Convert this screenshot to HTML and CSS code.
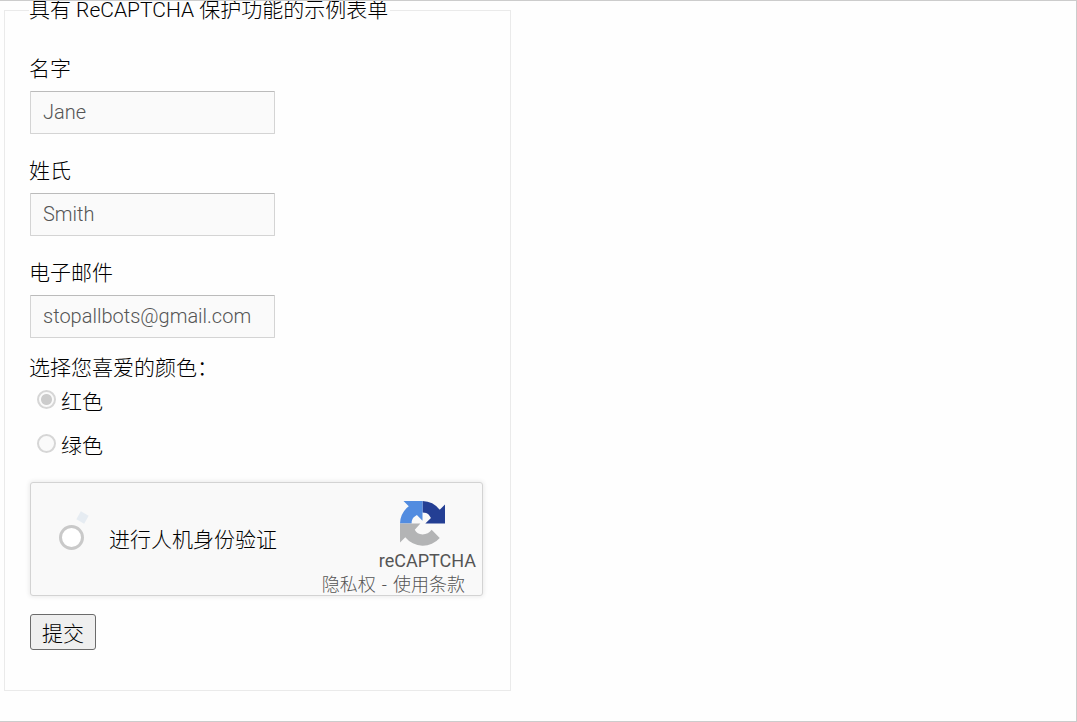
FILE: index.html
```
<!DOCTYPE html>
<html lang="zh-CN">
<head>
    <meta charset="UTF-8">
    <meta name="viewport" content="width=device-width, initial-scale=1.0">
    <title>ReCAPTCHA 示例</title>
    <link rel="stylesheet" href="styles.css">
</head>
<body>

    <form class="demo-form">
        <fieldset class="sample">
            <legend>具有 ReCAPTCHA 保护功能的示例表单</legend>

            <div class="field">
                <label for="first-name">名字</label>
                <input type="text" id="first-name" placeholder="Jane">
            </div>
            <div class="field">
                <label for="last-name">姓氏</label>
                <input type="text" id="last-name" placeholder="Smith">
            </div>
            <div class="field">
                <label for="email">电子邮件</label>
                <input type="text" id="email" placeholder="stopallbots@gmail.com">
            </div>

            <div class="colors" role="radiogroup" aria-labelledby="color-title">
                <p class="colors-title" id="color-title">选择您喜爱的颜色：</p>
                <div class="option">
                    <input type="radio" id="red" name="color" checked>
                    <label for="red">红色</label>
                </div>
                <div class="option">
                    <input type="radio" id="green" name="color">
                    <label for="green">绿色</label>
                </div>
            </div>

            <div class="captcha">
                <div class="captcha-check">
                    <input type="checkbox" id="human">
                    <span class="spark"></span>
                </div>
                <label for="human">进行人机身份验证</label>
                <div class="captcha-brand">
                    <svg class="captcha-logo" viewBox="0 0 64 64" aria-hidden="true">
                        <path fill="#243f94" d="M64 32V5l-7.500 7.500A31.900 31.900 0 0 0 32 0v16.500c4 0 7 1 9 3l3 4.500-8 8z"/>
                        <path fill="#528ce0" d="M32 0H5l7.500 7.500A31.900 31.900 0 0 0 0 32h16.500c0-4 1-7 3-9l4.500-3 8 8z"/>
                        <path fill="#b3b4b5" d="M0 32v27l7.500-7.500A31.900 31.900 0 0 0 56.500 52.500L45 41a16 16 0 0 1-13 6.500c-5 0-9-2-11-6.500l8-9z"/>
                    </svg>
                    <span class="captcha-name">reCAPTCHA</span>
                    <div class="captcha-links">
                        <a href="#">隐私权</a>
                        <span>-</span>
                        <a href="#">使用条款</a>
                    </div>
                </div>
            </div>

            <button class="submit" type="submit">提交</button>
        </fieldset>
    </form>

</body>
</html>
```
FILE: styles.css
```
* {
    box-sizing: border-box;
}
body {
    margin: 0;
    min-height: 100vh;
    border: 1px solid #ccc;
    border-left: none;
    background-color: #fefefe;
    color: #000;
    font-family: Roboto, "Noto Sans CJK SC", sans-serif;
    font-size: 21px;
    font-weight: 300;
}
.demo-form {
    max-width: 511px;
    padding-left: 4px;
}
.sample {
    margin: 0;
    padding: 35px 26px 40px 24px;
    border: 1px solid #eaeaea;
}
legend {
    padding: 0 2px 0 0;
    line-height: 18px;
}
.field {
    display: flex;
    flex-direction: column;
    align-items: flex-start;
    gap: 7px;
    margin-bottom: 22px;
}
.field label {
    line-height: 30px;
}
.field input {
    width: 245px;
    height: 43px;
    margin-left: 1px;
    padding: 0 12px 2px;
    border: 1px solid #d4d4d4;
    border-top-color: #bbb;
    border-radius: 1px;
    background-color: #fafafa;
    font: inherit;
    font-size: 20px;
}
.field input::placeholder {
    color: #555;
}
.colors {
    margin-top: -7px;
}
.colors-title {
    margin: 0;
    line-height: 30px;
}
.option {
    display: flex;
    align-items: center;
    gap: 5px;
    height: 44px;
    padding-left: 8px;
}
.option:first-of-type {
    margin-top: -5px;
}
.option input {
    appearance: none;
    width: 19px;
    height: 19px;
    margin: 0 0 2px;
    border: 2px solid #d6d6d6;
    border-radius: 50%;
    background-color: #fafafa;
}
.option input:checked {
    background: radial-gradient(circle, #ccc 5px, #fafafa 6px);
}
.captcha {
    display: flex;
    align-items: center;
    height: 114px;
    margin: 16px 1px 18px;
    padding: 0 6px 3px 28px;
    border: 1px solid #d3d3d3;
    border-radius: 3px;
    background-color: #f9f9f9;
    box-shadow: 0 0 4px 1px rgba(0, 0, 0, 0.08);
}
.captcha-check {
    display: flex;
    position: relative;
    margin-right: 25px;
}
.captcha-check input {
    appearance: none;
    width: 25px;
    height: 25px;
    margin: 0;
    border: 3px solid #c9c9c9;
    border-radius: 50%;
    background-color: #fff;
}
.spark {
    position: absolute;
    top: -12px;
    right: -3px;
    width: 9px;
    height: 9px;
    background-color: #e6ecf2;
    transform: rotate(30deg);
}
.captcha-brand {
    display: flex;
    flex-direction: column;
    align-items: flex-end;
    align-self: flex-start;
    margin-left: auto;
    padding-top: 18px;
    color: #555;
    font-size: 18px;
    line-height: 24px;
}
.captcha-logo {
    width: 45px;
    height: 45px;
    margin: 0 31px 3px 0;
}
.captcha-name {
    font-weight: 400;
}
.captcha-links {
    display: flex;
    gap: 6px;
    margin-right: 11px;
}
.captcha-links a {
    color: inherit;
    text-decoration: none;
}
.submit {
    display: block;
    width: 66px;
    height: 36px;
    margin-left: 1px;
    padding: 0;
    border: 1px solid #6b6b6b;
    border-radius: 3px;
    background-color: #efefef;
    color: #000;
    font: inherit;
}
```
